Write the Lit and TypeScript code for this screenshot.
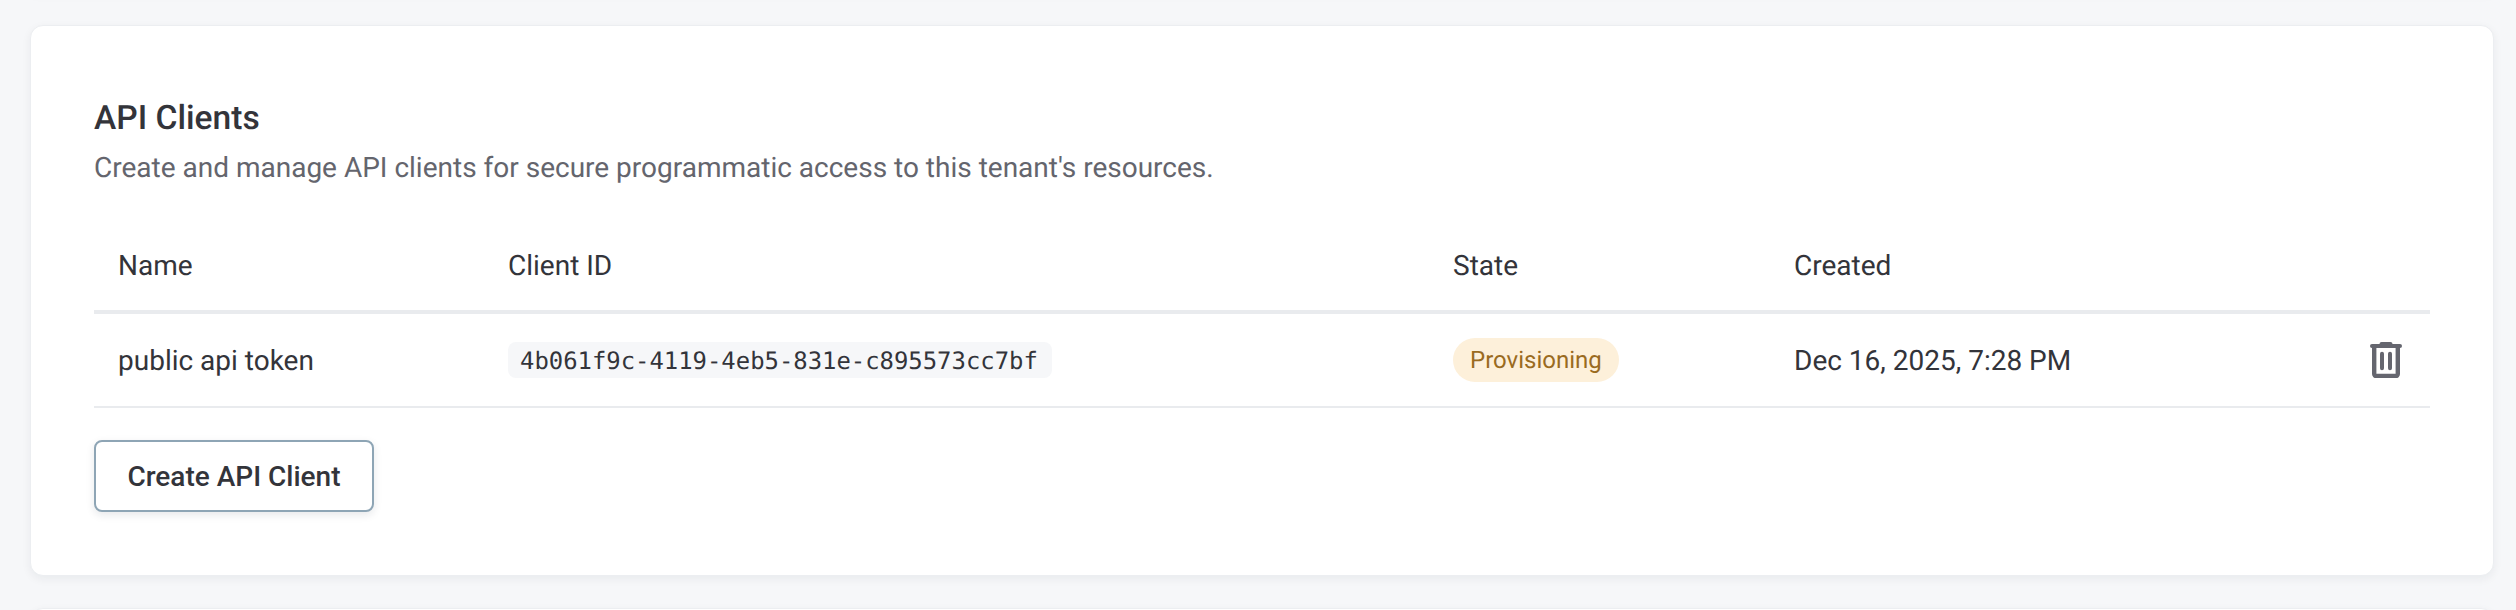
import { LitElement, html, css } from "lit";
import { customElement } from "lit/decorators.js";

@customElement("app-root")
export class AppRoot extends LitElement {
  static styles = css`
    :host { display: block; height: 610px; overflow: hidden; background: #f6f7f9; font-family: Roboto, "Liberation Sans", sans-serif; color: #33343a; text-rendering: geometricPrecision; }
    .stack { display: flex; flex-direction: column; gap: 32px; padding: 0 22px 0 30px; margin-top: -9px; }
    .card { background: #fff; border: 1px solid #eceef1; border-radius: 13px; box-shadow: 0 3px 10px rgba(20,30,50,.06); }
    .stubcard { height: 0; }
    .main { padding: 71px 63px 0; height: 551px; box-sizing: border-box; }
    h2 { margin: 0; font-size: 33.6px; line-height: 44px; font-weight: 500; }
    p { margin: 7px 0 0; font-size: 28px; line-height: 40px; color: #64656d; }
    table { border-collapse: separate; border-spacing: 0; table-layout: fixed; width: 100%; margin-top: 32px; font-size: 28px; }
    th, td { box-sizing: border-box; padding: 0 24px; text-align: left; font-weight: 400; }
    th { height: 94px; border-bottom: 4px solid #e9ebee; }
    td { height: 94px; border-bottom: 2px solid #e9ebee; }
    code { font-family: "DejaVu Sans Mono", monospace; font-size: 23.9px; line-height: 28px; background: #f6f7f9; border-radius: 8px; padding: 5px 14px 3px 12px; display: inline-block; vertical-align: middle; }
    .badge { display: inline-block; vertical-align: middle; background: #fdf0da; color: #9a6b1f; font-size: 24px; line-height: 44px; padding: 0 17px; border-radius: 22px; }
    .trash { display: block; margin: 0 4px 0 auto; width: 32px; height: 36px; }
    button { display: block; margin-top: 32px; width: 280px; height: 72px; background: #fff; border: 2px solid #8ea5b5; border-radius: 8px; font: 500 28px Roboto, sans-serif; color: #33343a; box-shadow: 0 3px 8px rgba(20,30,50,.1); padding: 0; }
    .next { height: 40px; }
  `;
  render() {
    return html`<div class="stack">
      <div class="card stubcard"></div>
      <section class="card main">
        <h2>API Clients</h2>
        <p>Create and manage API clients for secure programmatic access to this tenant's resources.</p>
        <table>
          <colgroup><col style="width:390px"><col style="width:945px"><col style="width:341px"><col style="width:540px"><col></colgroup>
          <thead><tr><th>Name</th><th>Client ID</th><th>State</th><th>Created</th><th></th></tr></thead>
          <tbody><tr>
            <td>public api token</td>
            <td><code>4b061f9c-4119-4eb5-831e-c895573cc7bf</code></td>
            <td><span class="badge">Provisioning</span></td>
            <td>Dec 16, 2025, 7:28 PM</td>
            <td><svg class="trash" viewBox="0 0 32 36" fill="none" stroke="#65666f" stroke-linecap="round" stroke-linejoin="round"><path d="M2 4h28" stroke-width="4"/><path d="M11.5 2h9" stroke-width="4"/><path d="M4.2 5v27a2 2 0 0 0 2 2h19.6a2 2 0 0 0 2-2V5" stroke-width="4.4"/><path d="M12 11.7v14.6M20 11.7v14.6" stroke-width="4"/></svg></td>
          </tr></tbody>
        </table>
        <button>Create API Client</button>
      </section>
      <div class="card next"></div>
    </div>`;
  }
}
